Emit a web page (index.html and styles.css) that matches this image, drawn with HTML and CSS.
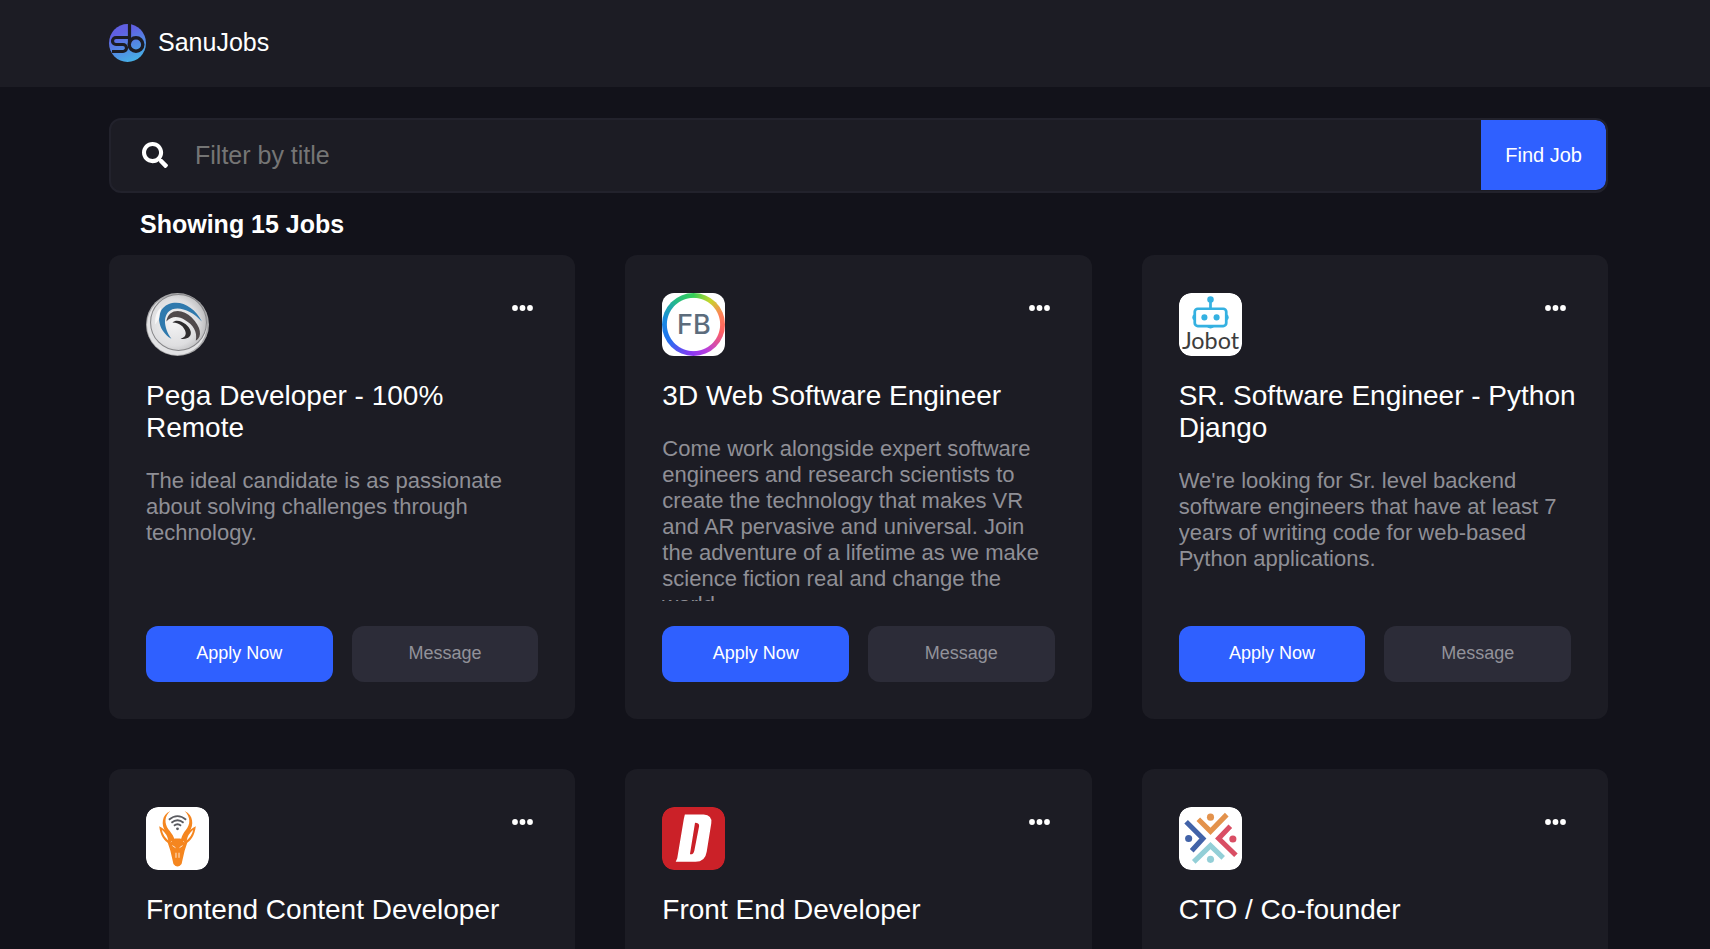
FILE: index.html
```html
<!DOCTYPE html>
<html lang="en">
<head>
<meta charset="utf-8">
<meta name="viewport" content="width=device-width, initial-scale=1">
<title>SanuJobs</title>
<link rel="stylesheet" href="styles.css">
</head>
<body>
<header class="navbar">
  <a class="brand" href="#">
    <svg class="brand-logo" viewBox="0 0 37 38" aria-hidden="true">
      <defs>
        <linearGradient id="brand" x1="0.3" y1="0" x2="0.7" y2="1"><stop offset="0.2" stop-color="#6060e2"/><stop offset="1" stop-color="#45b4e6"/></linearGradient>
      </defs>
      <ellipse cx="18.500" cy="19" rx="18.500" ry="19" fill="url(#brand)"/>
      <path d="M19 13.500H7a3.500 3.500 0 0 0 0 7H14a3.500 3.500 0 0 1 0 7H3M20.500 0V20" fill="none" stroke="#1c1c24" stroke-width="3.200"/>
      <circle cx="27" cy="20.500" r="6.800" fill="none" stroke="#1c1c24" stroke-width="3.400"/>
    </svg>
    <span>SanuJobs</span>
  </a>
</header>
<main class="page">
  <form class="search">
    <label class="search-label" for="title-filter" aria-label="Filter by title">
      <svg class="search-icon" viewBox="0 0 512 512" aria-hidden="true"><path fill="currentColor" d="M505 442.700 405.300 343c-4.500-4.500-10.600-7-17-7H372c27.600-35.300 44-79.700 44-128C416 93.100 322.900 0 208 0S0 93.100 0 208s93.100 208 208 208c48.300 0 92.700-16.400 128-44v16.300c0 6.400 2.500 12.500 7 17l99.700 99.700c9.400 9.400 24.600 9.400 33.900 0l28.300-28.300c9.400-9.400 9.400-24.600.1-34zM208 336c-70.700 0-128-57.200-128-128 0-70.700 57.200-128 128-128 70.700 0 128 57.200 128 128 0 70.700-57.200 128-128 128z"/></svg>
    </label>
    <input class="search-input" id="title-filter" type="text" placeholder="Filter by title">
    <button class="search-button" type="button">Find Job</button>
  </form>
  <h1 class="count">Showing 15 Jobs</h1>
  <section class="jobs">
    <article class="card">
      <div class="card-top">
        <svg class="logo" viewBox="0 0 62 62" aria-hidden="true">
          <defs>
            <radialGradient id="pearl" cx="0.42" cy="0.5" r="0.6"><stop offset="0" stop-color="#f4f4f5"/><stop offset="0.7" stop-color="#dedee0"/><stop offset="1" stop-color="#b9b9bb"/></radialGradient>
          </defs>
          <circle cx="31" cy="31" r="31" fill="#a9a9ab"/>
          <circle cx="30.500" cy="31.500" r="29.500" fill="#e2e2e4"/>
          <circle cx="32" cy="29" r="27.500" fill="url(#pearl)" stroke="#858588"/>
          <path d="M25 45C11 37 8 17 22 11 34 6 48 14 55 28 46 18 34 13 26 16 16 20 17 34 25 45Z" fill="#2f79ad"/>
          <path d="M20 28C22 15 36 15 45 24 54 33 56 43 49 47 51 38 46 31 39 27 31 22 25 23 20 28Z" fill="#504a4c"/>
          <path d="M26 29C32 24 43 32 44 38 45 43 41 46 34 45 41 43 40 38 36 33 33 30 30 29 26 29Z" fill="#2e2c2e"/>
          <path d="M9 31Q8 20 15 14L13 25Z" fill="#fff" opacity="0.7"/>
        </svg>
        <button class="more" type="button" aria-label="More options"><svg viewBox="0 0 21 6" aria-hidden="true"><circle cx="3" cy="3" r="2.900"/><circle cx="10.500" cy="3" r="2.900"/><circle cx="18" cy="3" r="2.900"/></svg></button>
      </div>
      <h2 class="title">Pega Developer - 100% Remote</h2>
      <p class="description">The ideal candidate is as passionate about solving challenges through technology.</p>
      <div class="actions"><button class="action apply" type="button">Apply Now</button><button class="action" type="button">Message</button></div>
    </article>
    <article class="card">
      <div class="card-top">
        <div class="logo fb-logo"><span class="fb-ring">FB</span></div>
        <button class="more" type="button" aria-label="More options"><svg viewBox="0 0 21 6" aria-hidden="true"><circle cx="3" cy="3" r="2.900"/><circle cx="10.500" cy="3" r="2.900"/><circle cx="18" cy="3" r="2.900"/></svg></button>
      </div>
      <h2 class="title">3D Web Software Engineer</h2>
      <p class="description">Come work alongside expert software engineers and research scientists to create the technology that makes VR and AR pervasive and universal. Join the adventure of a lifetime as we make science fiction real and change the world.</p>
      <div class="actions"><button class="action apply" type="button">Apply Now</button><button class="action" type="button">Message</button></div>
    </article>
    <article class="card">
      <div class="card-top">
        <svg class="logo" viewBox="0 0 62 62" role="img" aria-label="Jobot">
          <rect width="62" height="62" rx="12" fill="#fff"/>
          <g fill="none" stroke="#35b1e1" stroke-width="2.700"><rect x="15.500" y="15.500" width="31" height="17" rx="3"/><path d="M31 7V15"/></g>
          <g fill="#35b1e1"><circle cx="31" cy="6.500" r="3.200"/><circle cx="25" cy="24" r="3"/><circle cx="37" cy="24" r="3"/><path d="M15 21v6q-2-1-2-3t2-3zM47 21v6q2-1 2-3t-2-3zM27 33h8q-4 4-8 0z"/></g>
          <text class="jobot-text" x="31" y="55" text-anchor="middle">Jobot</text>
        </svg>
        <button class="more" type="button" aria-label="More options"><svg viewBox="0 0 21 6" aria-hidden="true"><circle cx="3" cy="3" r="2.900"/><circle cx="10.500" cy="3" r="2.900"/><circle cx="18" cy="3" r="2.900"/></svg></button>
      </div>
      <h2 class="title">SR. Software Engineer - Python Django</h2>
      <p class="description">We're looking for Sr. level backend software engineers that have at least 7 years of writing code for web-based Python applications.</p>
      <div class="actions"><button class="action apply" type="button">Apply Now</button><button class="action" type="button">Message</button></div>
    </article>
    <article class="card">
      <div class="card-top">
        <svg class="logo" viewBox="0 0 62 62" aria-hidden="true">
          <rect width="62" height="62" rx="12" fill="#fff"/>
          <g fill="#f5861f">
            <path d="M24 4C15 8 15 18 19 24 22 29 25 30 26 36H36C37 30 40 29 43 24 47 18 47 8 38 4 44 10 44 17 39 23 35 28 35 31 34 33H28C28 30 26 27 22 22 18 16 18 9 24 4Z"/>
            <path d="M23 36C18 34 14 28 13 19 19 22 24 27 26 33ZM39 36C44 34 48 28 49 19 43 22 38 27 36 33Z"/>
            <path d="M21 34Q26 36 28 31H34Q36 36 41 34L38 43 35 56Q31 61 27 56L24 43Z"/>
          </g>
          <path d="M15.500 22.500Q17 29 22 33 21 27 15.500 22.500ZM46.500 22.500Q45 29 40 33 41 27 46.500 22.500Z" fill="#fff"/>
          <path d="M26 38 29 40M36 38 33 40M29.500 45V50M32.500 45V50" stroke="#fff" stroke-width="0.800"/>
          <g fill="none" stroke="#5a5b60" stroke-width="1.800"><path d="M22.500 12.500Q31 5.500 39.500 12.500M25 15.500Q31 10.500 37 15.500M27.500 18.500Q31 15.500 34.500 18.500"/></g>
          <circle cx="31" cy="21.500" r="1.400" fill="#5a5b60"/>
        </svg>
        <button class="more" type="button" aria-label="More options"><svg viewBox="0 0 21 6" aria-hidden="true"><circle cx="3" cy="3" r="2.900"/><circle cx="10.500" cy="3" r="2.900"/><circle cx="18" cy="3" r="2.900"/></svg></button>
      </div>
      <h2 class="title">Frontend Content Developer</h2>
    </article>
    <article class="card">
      <div class="card-top">
        <svg class="logo" viewBox="0 0 62 62" aria-hidden="true">
          <rect width="62" height="62" rx="12" fill="#cb2128"/>
          <path fill="#fff" fill-rule="evenodd" d="M22.500 7.500H41Q49.500 8 48.500 16L44 44Q42.500 54 33 54H13.500L15 50.500 21.500 11.500ZM32.500 15.500 27.500 46.500Q31 47 31.800 43L36.500 19Q37 15.500 32.500 15.500Z"/>
        </svg>
        <button class="more" type="button" aria-label="More options"><svg viewBox="0 0 21 6" aria-hidden="true"><circle cx="3" cy="3" r="2.900"/><circle cx="10.500" cy="3" r="2.900"/><circle cx="18" cy="3" r="2.900"/></svg></button>
      </div>
      <h2 class="title">Front End Developer</h2>
    </article>
    <article class="card">
      <div class="card-top">
        <svg class="logo" viewBox="0 0 62 62" aria-hidden="true">
          <rect width="62" height="62" rx="12" fill="#fff"/>
          <g fill="none" stroke-width="5">
            <path d="M19 12 31 24 47 7.500" stroke="#e3924c"/>
            <path d="M7 14.500 23.500 31 12.500 43" stroke="#4263a8"/>
            <path d="M50.500 19 39 31 56 47.500" stroke="#d94e64"/>
            <path d="M14.500 54 31 38 43.500 50" stroke="#93cfd7"/>
          </g>
          <circle cx="31" cy="10" r="3.500" fill="#e3924c"/><circle cx="9.500" cy="31" r="3.500" fill="#4263a8"/><circle cx="53" cy="31.500" r="3.500" fill="#d94e64"/><circle cx="31" cy="51.500" r="3.500" fill="#93cfd7"/>
        </svg>
        <button class="more" type="button" aria-label="More options"><svg viewBox="0 0 21 6" aria-hidden="true"><circle cx="3" cy="3" r="2.900"/><circle cx="10.500" cy="3" r="2.900"/><circle cx="18" cy="3" r="2.900"/></svg></button>
      </div>
      <h2 class="title">CTO / Co-founder</h2>
    </article>
  </section>
</main>
</body>
</html>
```
FILE: styles.css
```css
* { box-sizing: border-box; }
html { scrollbar-width: none; }
body {
  margin: 0;
  background: #12121a;
  color: #fff;
  font-family: "Liberation Sans", Arial, sans-serif;
}
button, input { font: inherit; }
.navbar {
  display: flex;
  padding: 24px 109px 25px;
  background: #1c1c24;
}
.brand {
  display: flex;
  align-items: center;
  gap: 12px;
  color: #fff;
  font-size: 25px;
  line-height: 28px;
  text-decoration: none;
}
.brand span { padding-bottom: 2px; }
.brand-logo { width: 37px; height: 38px; }
.page { padding: 31px 102px 50px 109px; }
.search {
  display: flex;
  height: 75px;
  border: 2px solid #22222c;
  border-radius: 12px;
  background: #1c1c24;
  overflow: hidden;
}
.search-label { display: flex; align-items: center; padding: 0 26px 2px 31px; }
.search-icon { width: 26px; height: 26px; }
.search-input {
  flex: 1;
  min-width: 0;
  border: 0;
  padding: 0 0 0 1px;
  background: none;
  color: #fff;
  font-size: 25px;
  outline: none;
}
.search-input::placeholder { color: #757575; opacity: 1; }
.search-button {
  border: 0;
  border-radius: 0 10px 10px 0;
  margin-bottom: 1px;
  padding: 0 24px;
  background: #2f60ff;
  color: #fff;
  font-size: 20px;
}
.count {
  margin: 16px 31px;
  font-size: 25px;
  line-height: 30px;
}
.jobs {
  display: grid;
  grid-template-columns: repeat(3, minmax(0, 1fr));
  gap: 50px;
}
.card {
  display: flex;
  flex-direction: column;
  height: 464px;
  padding: 38px 37px 37px;
  border-radius: 12px;
  background: #1c1c24;
}
.card-top { display: flex; justify-content: space-between; align-items: flex-start; }
.logo { width: 63px; height: 63px; border-radius: 12px; }
.more {
  display: flex;
  border: 0;
  padding: 12px 5px;
  background: none;
}
.more svg { width: 21px; height: 6px; fill: #fff; }
.fb-logo { display: flex; overflow: hidden; background: #fff; }
.fb-ring {
  flex: 1;
  display: flex;
  align-items: center;
  justify-content: center;
  border-radius: 50%;
  background:
    radial-gradient(circle closest-side, #fff 83%, transparent 86%),
    conic-gradient(#35cf58, #c6d62c 35deg, #ff8057 70deg, #ff5f62 105deg, #b53de0 155deg, #8838f4 185deg, #2073ef 240deg, #188ae0 280deg, #26bd83 325deg, #35cf58);
  color: #5c6c7c;
  font: 500 27px/32px Inter, sans-serif;
}
.jobot-text { font: 23px Lato, sans-serif; fill: #3d3d3d; }
.title {
  margin: 24px -6px 24px 0;
  font-size: 28px;
  font-weight: 400;
  line-height: 32px;
}
.description {
  flex: 1;
  min-height: 0;
  margin: 0 0 25px;
  overflow: hidden;
  color: #8f8f96;
  font-size: 22px;
  line-height: 26px;
}
.actions { display: grid; grid-template-columns: 1fr 1fr; gap: 19px; }
.action {
  border: 0;
  border-radius: 12px;
  padding: 16px 0 18px;
  background: #2c2c38;
  color: #92929a;
  font-size: 18px;
  line-height: 22px;
}
.apply { background: #2f60ff; color: #fff; }
```
